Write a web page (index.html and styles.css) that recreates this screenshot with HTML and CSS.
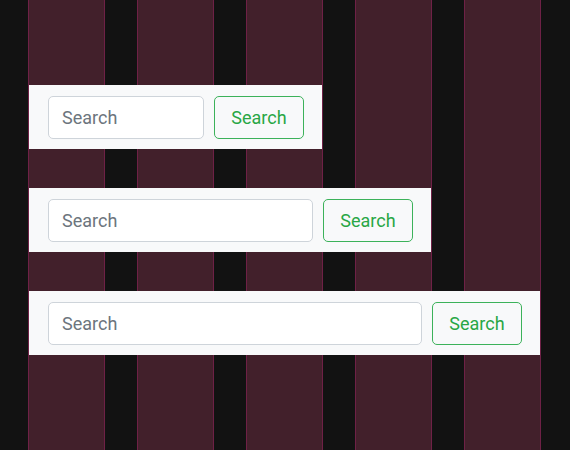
FILE: index.html
```html
<!DOCTYPE html>
<html lang="en">
<head>
    <meta charset="UTF-8">
    <meta name="viewport" content="width=device-width, initial-scale=1.0">
    <title>Search bars</title>
    <link rel="stylesheet" href="styles.css">
</head>
<body>

    <div class="grid">
        <div class="stripe col-1"></div>
        <div class="stripe col-2"></div>
        <div class="stripe col-3"></div>
        <div class="stripe col-4"></div>
        <div class="stripe col-5"></div>

        <form class="bar bar-sm">
            <input type="search" class="field" placeholder="Search">
            <button type="button" class="btn">Search</button>
        </form>

        <form class="bar bar-md">
            <input type="search" class="field" placeholder="Search">
            <button type="button" class="btn">Search</button>
        </form>

        <form class="bar bar-lg">
            <input type="search" class="field" placeholder="Search">
            <button type="button" class="btn">Search</button>
        </form>
    </div>

</body>
</html>
```

FILE: styles.css
```css
html, body {
    height: 100%;
}
body {
    font-family: Roboto, "Liberation Sans", sans-serif;
    background-color: #121212;
    margin: 0;
    overflow: hidden;
}
.grid {
    display: grid;
    grid-template-columns: repeat(5, 77px);
    grid-template-rows: 85px 64px 39px 64px 39px 64px 1fr;
    column-gap: 32px;
    height: 100%;
    margin-left: 28px;
}
.stripe {
    grid-row: 1 / -1;
    background-color: #42202b;
    border-left: 1px solid #6e2146;
    border-right: 1px solid #6e2146;
}
.col-1 { grid-column: 1; }
.col-2 { grid-column: 2; }
.col-3 { grid-column: 3; }
.col-4 { grid-column: 4; }
.col-5 { grid-column: 5; }

.bar {
    display: flex;
    align-items: center;
    gap: 10px;
    margin: 0 1px;
    padding: 0 18px 0 19px;
    background-color: #f8f9fa;
}
.bar-sm { grid-row: 2; grid-column: 1 / span 3; }
.bar-md { grid-row: 4; grid-column: 1 / span 4; }
.bar-lg { grid-row: 6; grid-column: 1 / span 5; }

.field {
    flex: 1;
    min-width: 0;
    height: 43px;
    box-sizing: border-box;
    padding: 0 13px;
    font-family: inherit;
    font-size: 18px;
    color: #212529;
    background: #fff;
    border: 1px solid #ced4da;
    border-radius: 5px;
    outline: none;
    -webkit-appearance: none;
}
.field::placeholder {
    color: #6c757d;
}
.btn {
    width: 90px;
    height: 43px;
    box-sizing: border-box;
    padding: 0;
    font-family: inherit;
    font-size: 18px;
    color: #28a745;
    background: transparent;
    border: 1px solid #3cb25a;
    border-radius: 5px;
    cursor: pointer;
}
.btn:hover {
    color: #fff;
    background-color: #28a745;
}
```
